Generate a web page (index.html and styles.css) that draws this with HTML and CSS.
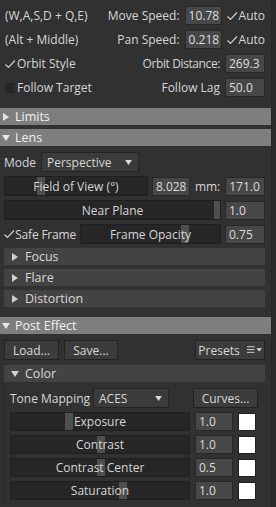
FILE: index.html
```html
<!DOCTYPE html>
<html>
<head>
<meta charset="utf-8">
<link rel="stylesheet" href="styles.css">
</head>
<body>
<div class="panel">
  <div class="nav">
    <div class="nrow">
      <span class="lbl">(W,A,S,D + Q,E)</span>
      <div class="rgrp">
        <span class="lbl">Move Speed:</span>
        <span class="num w36">10.78</span>
        <span class="chk on"><i class="box"><svg viewBox="0 0 12 12"><path d="M1.5 6.5 L4.5 9.5 L11 2.5"/></svg></i>Auto</span>
      </div>
    </div>
    <div class="nrow">
      <span class="lbl">(Alt + Middle)</span>
      <div class="rgrp">
        <span class="lbl">Pan Speed:</span>
        <span class="num w36">0.218</span>
        <span class="chk on"><i class="box"><svg viewBox="0 0 12 12"><path d="M1.5 6.5 L4.5 9.5 L11 2.5"/></svg></i>Auto</span>
      </div>
    </div>
    <div class="nrow">
      <span class="chk on"><i class="box"><svg viewBox="0 0 12 12"><path d="M1.5 6.5 L4.5 9.5 L11 2.5"/></svg></i>Orbit Style</span>
      <div class="rgrp">
        <span class="lbl narrow">Orbit Distance:</span>
        <span class="num w39">269.3</span>
      </div>
    </div>
    <div class="nrow">
      <span class="chk"><i class="box"></i>Follow Target</span>
      <div class="rgrp">
        <span class="lbl">Follow Lag</span>
        <span class="num w39">50.0</span>
      </div>
    </div>
  </div>

  <div class="hdr"><svg class="tri" viewBox="0 0 8 8"><path d="M1 0 L7 4 L1 8Z"/></svg>Limits</div>
  <div class="hdr"><svg class="tri" viewBox="0 0 8 8"><path d="M0 1 L8 1 L4 7Z"/></svg>Lens</div>

  <div class="lens">
    <div class="row">
      <span class="lbl modelbl">Mode</span>
      <span class="drop w98">Perspective<svg class="dtri" viewBox="0 0 8 6"><path d="M0 0 L8 0 L4 6Z"/></svg></span>
    </div>
    <div class="row">
      <div class="slider s144"><span class="thumb" style="left:32px"></span><span class="stxt">Field of View (°)</span></div>
      <span class="num w38">8.028</span>
      <span class="lbl mm">mm:</span>
      <span class="num w39">171.0</span>
    </div>
    <div class="row">
      <div class="slider grow"><span class="thumb" style="left:209px"></span><span class="stxt">Near Plane</span></div>
      <span class="num w39">1.0</span>
    </div>
    <div class="row">
      <span class="chk on sf"><i class="box"><svg viewBox="0 0 12 12"><path d="M1.5 6.5 L4.5 9.5 L11 2.5"/></svg></i>Safe Frame</span>
      <div class="slider grow"><span class="thumb" style="left:100px"></span><span class="stxt">Frame Opacity</span></div>
      <span class="num w39">0.75</span>
    </div>
    <div class="subs">
      <div class="sub"><svg class="tri" viewBox="0 0 8 8"><path d="M1 0 L7 4 L1 8Z"/></svg>Focus</div>
      <div class="sub"><svg class="tri" viewBox="0 0 8 8"><path d="M1 0 L7 4 L1 8Z"/></svg>Flare</div>
      <div class="sub"><svg class="tri" viewBox="0 0 8 8"><path d="M1 0 L7 4 L1 8Z"/></svg>Distortion</div>
    </div>
  </div>

  <div class="hdr pe"><svg class="tri" viewBox="0 0 8 8"><path d="M0 1 L8 1 L4 7Z"/></svg>Post Effect</div>

  <div class="post">
    <div class="brow">
      <span class="btn w55">Load...</span>
      <span class="btn w54">Save...</span>
      <span class="btn presets">Presets<svg class="menu" viewBox="0 0 16 8"><path d="M0 0.5H8M0 3.5H8M0 6.5H8" /><path class="f" d="M10 2 L16 2 L13 5.5Z"/></svg></span>
    </div>
    <div class="sub open"><svg class="tri" viewBox="0 0 8 8"><path d="M0 1 L8 1 L4 7Z"/></svg>Color</div>
    <div class="colorbox">
      <div class="row tm">
        <span class="lbl tmlbl">Tone Mapping</span>
        <span class="drop w76">ACES<svg class="dtri" viewBox="0 0 8 6"><path d="M0 0 L8 0 L4 6Z"/></svg></span>
        <span class="btn curves">Curves...</span>
      </div>
      <div class="row crow">
        <div class="slider grow"><span class="thumb" style="left:54px"></span><span class="stxt">Exposure</span></div>
        <span class="num w38">1.0</span>
        <span class="swatch"></span>
      </div>
      <div class="row crow">
        <div class="slider grow"><span class="thumb" style="left:86px"></span><span class="stxt">Contrast</span></div>
        <span class="num w38">1.0</span>
        <span class="swatch"></span>
      </div>
      <div class="row crow">
        <div class="slider grow"><span class="thumb" style="left:86px"></span><span class="stxt">Contrast Center</span></div>
        <span class="num w38">0.5</span>
        <span class="swatch"></span>
      </div>
      <div class="row crow">
        <div class="slider grow"><span class="thumb" style="left:108px"></span><span class="stxt">Saturation</span></div>
        <span class="num w38">1.0</span>
        <span class="swatch"></span>
      </div>
    </div>
  </div>
</div>
</body>
</html>
```
FILE: styles.css
```css
html, body {
  margin: 0;
  padding: 0;
  background: #2b2b2b;
}
body {
  width: 276px;
  height: 507px;
  overflow: hidden;
  font-family: "Open Sans", "Noto Sans", sans-serif;
  font-size: 12px;
  color: #d6d6d6;
}
.panel {
  width: 272px;
  height: 507px;
  background: #313131;
  border-right: 1px solid #262626;
  box-sizing: border-box;
}
.nav {
  padding: 6px 6px 0 5px;
  display: flex;
  flex-direction: column;
  gap: 5px;
}
.nrow {
  height: 19px;
  display: flex;
  align-items: center;
  justify-content: space-between;
}
.rgrp {
  display: flex;
  align-items: center;
  gap: 5px;
}
.lbl { white-space: nowrap; }
.narrow { letter-spacing: -0.4px; }
.num {
  box-sizing: border-box;
  height: 19px;
  background: #474747;
  border: 1px solid #282828;
  color: #dcdcdc;
  padding: 0 3px;
  line-height: 17px;
  font-size: 12px;
  white-space: nowrap;
}
.w36 { width: 37px; }
.w38 { width: 38px; }
.w39 { width: 40px; }
.chk {
  display: flex;
  align-items: center;
  white-space: nowrap;
}
.box {
  width: 10px;
  height: 10px;
  background: #262626;
  margin-right: 2px;
  display: block;
  position: relative;
}
.chk.on .box { background: transparent; }
.box svg {
  width: 12px;
  height: 12px;
  fill: none;
  stroke: #cfcfcf;
  stroke-width: 1.2;
  position: absolute;
  left: -1px;
  top: -1px;
}
.hdr {
  height: 17px;
  background: #7e7e7e;
  color: #f2f2f2;
  display: flex;
  align-items: center;
  font-size: 12.5px;
  margin-top: 4px;
}
.nav + .hdr { margin-top: 11px; }
.hdr.pe { margin-top: 10px; }
.tri {
  width: 8px;
  height: 8px;
  fill: #e6e6e6;
  margin: 0 5px 0 2px;
}
.lens {
  padding: 6px 6px 0 4px;
  display: flex;
  flex-direction: column;
  gap: 4px;
}
.row {
  display: flex;
  align-items: center;
  gap: 4px;
  height: 20px;
}
.modelbl { width: 37px; flex: none; }
.row .modelbl { margin-right: -4px; }
.drop {
  box-sizing: border-box;
  height: 20px;
  background: #3b3b3b;
  border: 1px solid #252525;
  display: flex;
  align-items: center;
  justify-content: space-between;
  padding: 0 6px 0 5px;
}
.w98 { width: 98px; }
.w76 { width: 76px; }
.dtri {
  width: 7px;
  height: 5px;
  fill: #dcdcdc;
}
.slider {
  position: relative;
  box-sizing: border-box;
  height: 20px;
  background: #262626;
  border: 1px solid #1f1f1f;
  display: flex;
  align-items: center;
  justify-content: center;
  overflow: hidden;
}
.s144 { width: 145px; }
.grow { flex: 1; }
.thumb {
  position: absolute;
  top: 0;
  bottom: 0;
  width: 8px;
  background: #4f4f4f;
}
.stxt {
  position: relative;
  white-space: nowrap;
}
.mm { margin: 0 1px; }
.sf { width: 72px; flex: none; letter-spacing: -0.2px; }
.subs {
  display: flex;
  flex-direction: column;
  gap: 4px;
}
.sub {
  height: 17px;
  background: #434343;
  display: flex;
  align-items: center;
  color: #d8d8d8;
  font-size: 12.5px;
}
.sub .tri {
  fill: #d0d0d0;
  margin: 0 6px 0 7px;
}
.post {
  padding: 6px 6px 0 4px;
  display: flex;
  flex-direction: column;
  gap: 5px;
}
.brow {
  display: flex;
  align-items: center;
  gap: 5px;
  height: 20px;
}
.btn {
  box-sizing: border-box;
  height: 20px;
  background: #3c3c3c;
  border: 1px solid #222;
  display: flex;
  align-items: center;
  justify-content: center;
  color: #d8d8d8;
  white-space: nowrap;
}
.w55 { width: 55px; }
.w54 { width: 54px; }
.presets {
  margin-left: auto;
  width: 70px;
  gap: 7px;
}
.menu {
  width: 15px;
  height: 8px;
  stroke: #d8d8d8;
  stroke-width: 1;
  fill: none;
}
.menu .f { fill: #d8d8d8; stroke: none; }
.colorbox {
  margin-top: -5px;
  border-left: 1px solid #262626;
  padding: 6px 0 3px 5px;
  display: flex;
  flex-direction: column;
  gap: 4px;
}
.tm { gap: 0; }
.tmlbl { width: 83px; flex: none; }
.curves {
  width: 65px;
  margin-left: auto;
  margin-right: 7px;
}
.crow { height: 19px; gap: 5px; }
.crow .slider { height: 19px; }
.crow .num { width: 38px; }
.swatch {
  width: 18px;
  height: 18px;
  background: #fff;
  margin-right: 9px;
  border: 1px solid #222;
  box-sizing: border-box;
}
```
